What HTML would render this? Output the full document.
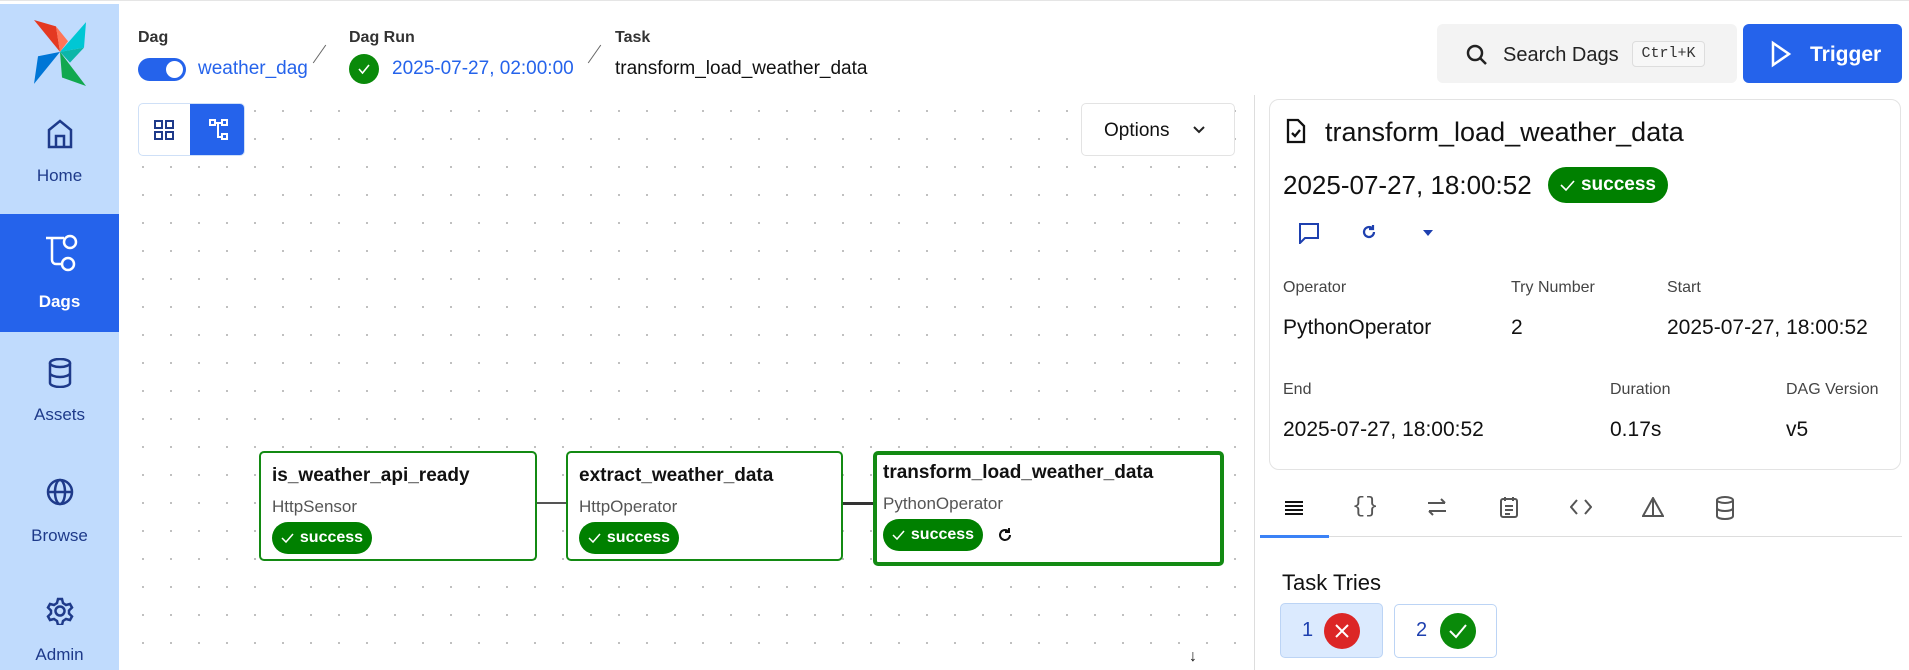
<!DOCTYPE html>
<html><head><meta charset="utf-8"><style>
*{box-sizing:border-box;margin:0;padding:0}
body{width:1909px;height:670px;overflow:hidden;background:#fff;font-family:"Liberation Sans",sans-serif;position:relative;color:#111}
.a{position:absolute}
.topline{left:0;top:0;width:1909px;height:4px;border-top:1px solid #e5e5e5;background:#fff}
.side{left:0;top:4px;width:119px;height:666px;background:#c0dbfd}
.nav{left:0;width:119px;text-align:center;color:#1e3a8a;font-size:17px}
.lbl{font-size:16px;font-weight:bold;color:#333}
.grid{left:119px;top:95px;width:1135px;height:575px;background-image:radial-gradient(circle,#bbb 1px,transparent 1.2px);background-size:28px 28px;background-position:10px 2px}
.node{border:2px solid #138a13;border-radius:5px;background:#fff}
.badge{background:#008000;color:#fff;border-radius:17px;font-weight:bold;font-size:16px;display:flex;align-items:center;justify-content:center;gap:6px}
.k{font-size:16px;color:#444}
.v{font-size:21px;color:#111}
</style></head><body>
<div class="a topline"></div>
<div class="a side"></div>
<!-- logo -->
<svg class="a" style="left:34px;top:20px" width="52" height="66" viewBox="0 0 52 62" preserveAspectRatio="none">
<path d="M0 0 L26 30 L22 6 Z" fill="#e43921"/><path d="M52 2 L26 30 L50 26 Z" fill="#00c7d4"/>
<path d="M52 62 L26 30 L28 54 Z" fill="#11a84f"/><path d="M0 60 L26 30 L4 34 Z" fill="#0076d6"/>
<path d="M26 30 L22 6 L34 20Z" fill="#ff7557"/><path d="M26 30 L50 26 L36 40Z" fill="#0cb6a8"/>
</svg>
<svg class="a" style="left:47px;top:119px" width="26" height="30" viewBox="0 0 26 30" fill="none" stroke="#1e3a8a" stroke-width="2.5"><path d="M2 28V11L13 2l11 9v17z"/><path d="M9 28V17h8v11"/></svg>
<div class="a nav" style="top:166px">Home</div>
<div class="a" style="left:0;top:214px;width:119px;height:118px;background:#2563eb"></div>
<svg class="a" style="left:44px;top:234px" width="34" height="38" viewBox="0 0 34 38" fill="none" stroke="#fff" stroke-width="2.5"><path d="M2 4h18M8 4v22a4 4 0 0 0 4 4h6"/><circle cx="26" cy="8" r="6"/><circle cx="24" cy="30" r="6"/></svg>
<div class="a nav" style="top:292px;color:#fff;font-weight:bold">Dags</div>
<svg class="a" style="left:47px;top:358px" width="26" height="30" viewBox="0 0 26 30" fill="none" stroke="#1e3a8a" stroke-width="2.5"><ellipse cx="13" cy="5" rx="10" ry="4"/><path d="M3 5v20c0 2 4.5 4 10 4s10-2 10-4V5M3 15c0 2 4.5 4 10 4s10-2 10-4"/></svg>
<div class="a nav" style="top:405px">Assets</div>
<svg class="a" style="left:46px;top:478px" width="28" height="28" viewBox="0 0 28 28" fill="none" stroke="#1e3a8a" stroke-width="2.5"><circle cx="14" cy="14" r="12"/><ellipse cx="14" cy="14" rx="5" ry="12"/><path d="M2 14h24"/></svg>
<div class="a nav" style="top:526px">Browse</div>
<svg class="a" style="left:46px;top:597px" width="28" height="28" viewBox="0 0 28 28" fill="none" stroke="#1e3a8a" stroke-width="2.5"><circle cx="14" cy="14" r="4.5"/><path d="M12 2h4l1 4 3 2 4-1 2 3.5-3 3v3l3 3-2 3.5-4-1-3 2-1 4h-4l-1-4-3-2-4 1-2-3.5 3-3v-3l-3-3 2-3.5 4 1 3-2z"/></svg>
<div class="a nav" style="top:645px">Admin</div>

<!-- breadcrumb -->
<div class="a lbl" style="left:138px;top:29px">Dag</div>
<div class="a" style="left:138px;top:58px;width:48px;height:23px;border-radius:12px;background:#2563eb"><div style="position:absolute;right:3px;top:3px;width:17px;height:17px;border-radius:50%;background:#fff"></div></div>
<div class="a" style="left:198px;top:58px;font-size:19px;color:#2563eb">weather_dag</div>
<div class="a" style="left:319px;top:43px;width:1px;height:22px;background:#666;transform:rotate(35deg)"></div>
<div class="a lbl" style="left:349px;top:29px">Dag Run</div>
<div class="a" style="left:349px;top:54px;width:30px;height:30px;border-radius:50%;background:#0a8a0a"></div>
<svg class="a" style="left:357px;top:62px" width="14" height="14" viewBox="0 0 14 14" fill="none" stroke="#fff" stroke-width="1.6"><path d="M2 7l3.5 4L12 3"/></svg>
<div class="a" style="left:392px;top:58px;font-size:19px;color:#2563eb">2025-07-27, 02:00:00</div>
<div class="a" style="left:594px;top:43px;width:1px;height:22px;background:#666;transform:rotate(35deg)"></div>
<div class="a lbl" style="left:615px;top:29px">Task</div>
<div class="a" style="left:615px;top:58px;font-size:19px;color:#111">transform_load_weather_data</div>

<!-- search/trigger -->
<div class="a" style="left:1437px;top:24px;width:300px;height:59px;background:#f3f3f3;border-radius:6px"></div>
<svg class="a" style="left:1465px;top:43px" width="24" height="24" viewBox="0 0 24 24" fill="none" stroke="#222" stroke-width="2.5"><circle cx="10" cy="10" r="7"/><path d="M15 15l6 6"/></svg>
<div class="a" style="left:1503px;top:44px;font-size:20px;color:#222">Search Dags</div>
<div class="a" style="left:1632px;top:41px;width:73px;height:26px;border:1px solid #ddd;border-radius:4px;background:#f7f7f7;font-family:'Liberation Mono',monospace;font-size:15px;text-align:center;line-height:24px;color:#333">Ctrl+K</div>
<div class="a" style="left:1743px;top:24px;width:159px;height:59px;background:#2563eb;border-radius:6px"></div>
<svg class="a" style="left:1770px;top:40px" width="22" height="28" viewBox="0 0 22 28" fill="none" stroke="#fff" stroke-width="2.5"><path d="M3 3v22l16-11z"/></svg>
<div class="a" style="left:1810px;top:43px;font-size:21px;color:#fff;font-weight:bold">Trigger</div>

<!-- graph -->
<div class="a grid"></div>
<div class="a" style="left:1254px;top:95px;width:1px;height:575px;background:#ddd"></div>
<div class="a" style="left:138px;top:103px;width:107px;height:53px;border:1px solid #cfe0f7;border-radius:5px;background:#fff;overflow:hidden"><div style="position:absolute;right:0;top:0;width:54px;height:53px;background:#2563eb"></div></div>
<svg class="a" style="left:154px;top:120px" width="20" height="20" viewBox="0 0 20 20" fill="none" stroke="#1e3a8a" stroke-width="2"><rect x="1" y="1" width="7" height="7"/><rect x="12" y="1" width="7" height="7"/><rect x="1" y="12" width="7" height="7"/><rect x="12" y="12" width="7" height="7"/></svg>
<svg class="a" style="left:209px;top:119px" width="20" height="22" viewBox="0 0 20 22" fill="none" stroke="#fff" stroke-width="2"><rect x="1" y="1" width="5" height="5"/><rect x="13" y="1" width="5" height="5"/><rect x="13" y="15" width="5" height="5"/><path d="M6 4h7M9 4v14h4"/></svg>
<div class="a" style="left:1081px;top:103px;width:154px;height:53px;border:1px solid #e3e3e3;border-radius:5px;background:#fff;font-size:19px;padding:16px 0 0 22px">Options</div>
<svg class="a" style="left:1192px;top:125px" width="14" height="9" viewBox="0 0 14 9" fill="none" stroke="#222" stroke-width="2"><path d="M2 2l5 5 5-5"/></svg>

<div class="a" style="left:536px;top:502px;width:30px;height:2px;background:#555"></div>
<div class="a" style="left:843px;top:502px;width:30px;height:3px;background:#333"></div>
<div class="a node" style="left:259px;top:451px;width:278px;height:110px"></div>
<div class="a" style="left:272px;top:465px;font-size:19px;font-weight:bold">is_weather_api_ready</div>
<div class="a" style="left:272px;top:497px;font-size:17px;color:#555">HttpSensor</div>
<div class="a badge" style="left:272px;top:522px;width:100px;height:32px"><svg width="13" height="12" viewBox="0 0 13 12" fill="none" stroke="#fff" stroke-width="1.5"><path d="M1 6l4 4 7-8"/></svg>success</div>
<div class="a node" style="left:566px;top:451px;width:277px;height:110px"></div>
<div class="a" style="left:579px;top:465px;font-size:19px;font-weight:bold">extract_weather_data</div>
<div class="a" style="left:579px;top:497px;font-size:17px;color:#555">HttpOperator</div>
<div class="a badge" style="left:579px;top:522px;width:100px;height:32px"><svg width="13" height="12" viewBox="0 0 13 12" fill="none" stroke="#fff" stroke-width="1.5"><path d="M1 6l4 4 7-8"/></svg>success</div>
<div class="a node" style="left:873px;top:451px;width:351px;height:115px;border-width:4px"></div>
<div class="a" style="left:883px;top:462px;font-size:19px;font-weight:bold">transform_load_weather_data</div>
<div class="a" style="left:883px;top:494px;font-size:17px;color:#555">PythonOperator</div>
<div class="a badge" style="left:883px;top:519px;width:100px;height:32px"><svg width="13" height="12" viewBox="0 0 13 12" fill="none" stroke="#fff" stroke-width="1.5"><path d="M1 6l4 4 7-8"/></svg>success</div>
<svg class="a" style="left:997px;top:527px" width="16" height="16" viewBox="0 0 16 16" fill="none" stroke="#111" stroke-width="2"><path d="M13 8a5 5 0 1 1-2-4"/><path d="M12 1v4H8" /></svg>
<div class="a" style="left:1189px;top:648px;font-size:16px">↓</div>

<!-- right card -->
<div class="a" style="left:1269px;top:99px;width:632px;height:371px;border:1px solid #e3e3e3;border-radius:10px"></div>
<svg class="a" style="left:1286px;top:118px" width="20" height="26" viewBox="0 0 20 26" fill="none" stroke="#111" stroke-width="2.3"><path d="M2 2h10l6 6v16H2z"/><path d="M6 15l3 3 5-6"/></svg>
<div class="a" style="left:1325px;top:117px;font-size:27px">transform_load_weather_data</div>
<div class="a" style="left:1283px;top:170px;font-size:26px;font-weight:500">2025-07-27, 18:00:52</div>
<div class="a badge" style="left:1548px;top:167px;width:120px;height:36px;border-radius:18px;font-size:19px"><svg width="15" height="13" viewBox="0 0 15 13" fill="none" stroke="#fff" stroke-width="1.6"><path d="M1 6l5 5 8-9"/></svg>success</div>
<svg class="a" style="left:1298px;top:222px" width="22" height="22" viewBox="0 0 22 22" fill="none" stroke="#1e40af" stroke-width="2"><path d="M2 2h18v14H7l-5 5z"/></svg>
<svg class="a" style="left:1361px;top:224px" width="16" height="16" viewBox="0 0 16 16" fill="none" stroke="#1e40af" stroke-width="2.2"><path d="M13 8a5 5 0 1 1-2-4"/><path d="M12 1v4H8"/></svg>
<div class="a" style="left:1423px;top:230px;width:0;height:0;border-left:5px solid transparent;border-right:5px solid transparent;border-top:6px solid #1e40af"></div>
<div class="a k" style="left:1283px;top:279px">Operator</div>
<div class="a k" style="left:1511px;top:279px">Try Number</div>
<div class="a k" style="left:1667px;top:279px">Start</div>
<div class="a v" style="left:1283px;top:316px">PythonOperator</div>
<div class="a v" style="left:1511px;top:316px">2</div>
<div class="a v" style="left:1667px;top:316px">2025-07-27, 18:00:52</div>
<div class="a k" style="left:1283px;top:381px">End</div>
<div class="a k" style="left:1610px;top:381px">Duration</div>
<div class="a k" style="left:1786px;top:381px">DAG Version</div>
<div class="a v" style="left:1283px;top:418px">2025-07-27, 18:00:52</div>
<div class="a v" style="left:1610px;top:418px">0.17s</div>
<div class="a v" style="left:1786px;top:418px">v5</div>

<!-- tabs -->
<svg class="a" style="left:1285px;top:500px" width="18" height="16" viewBox="0 0 18 16" stroke="#111" stroke-width="2"><path d="M0 2h18M0 6h18M0 10h18M0 14h18"/></svg>
<div class="a" style="left:1352px;top:494px;font-size:22px;color:#555;font-family:'Liberation Mono',monospace">{}</div>
<svg class="a" style="left:1427px;top:498px" width="20" height="18" viewBox="0 0 20 18" fill="none" stroke="#555" stroke-width="2"><path d="M1 5h17M14 1l4 4M19 13H2M6 17l-4-4"/></svg>
<svg class="a" style="left:1500px;top:496px" width="18" height="22" viewBox="0 0 18 22" fill="none" stroke="#555" stroke-width="2"><rect x="1" y="3" width="16" height="18" rx="2"/><path d="M5 1v4M13 1v4M5 10h8M5 14h8M5 18h5"/></svg>
<svg class="a" style="left:1570px;top:498px" width="22" height="18" viewBox="0 0 22 18" fill="none" stroke="#555" stroke-width="2"><path d="M7 2L1 9l6 7M15 2l6 7-6 7"/></svg>
<svg class="a" style="left:1642px;top:497px" width="22" height="20" viewBox="0 0 22 20" fill="none" stroke="#555" stroke-width="2"><path d="M11 1L1 19h20zM11 1v18"/></svg>
<svg class="a" style="left:1715px;top:496px" width="20" height="24" viewBox="0 0 20 24" fill="none" stroke="#555" stroke-width="2"><ellipse cx="10" cy="4" rx="8" ry="3"/><path d="M2 4v16c0 2 4 3 8 3s8-1 8-3V4M2 12c0 2 4 3 8 3s8-1 8-3"/></svg>
<div class="a" style="left:1260px;top:536px;width:642px;height:1px;background:#ddd"></div>
<div class="a" style="left:1260px;top:535px;width:69px;height:3px;background:#3b82f6"></div>

<div class="a" style="left:1282px;top:570px;font-size:22px;font-weight:500">Task Tries</div>
<div class="a" style="left:1280px;top:603px;width:103px;height:55px;background:#dbeafe;border:1px solid #bcd4f5;border-radius:5px"></div>
<div class="a" style="left:1302px;top:619px;font-size:20px;color:#1e40af">1</div>
<div class="a" style="left:1324px;top:613px;width:36px;height:36px;border-radius:50%;background:#dc2626"></div>
<svg class="a" style="left:1334px;top:623px" width="16" height="16" viewBox="0 0 16 16" stroke="#fff" stroke-width="2"><path d="M2 2l12 12M14 2L2 14"/></svg>
<div class="a" style="left:1394px;top:604px;width:103px;height:54px;background:#fff;border:1px solid #bcd4f5;border-radius:5px"></div>
<div class="a" style="left:1416px;top:619px;font-size:20px;color:#1e40af">2</div>
<div class="a" style="left:1440px;top:613px;width:36px;height:36px;border-radius:50%;background:#0a8a0a"></div>
<svg class="a" style="left:1448px;top:622px" width="20" height="18" viewBox="0 0 20 18" fill="none" stroke="#fff" stroke-width="2"><path d="M2 9l6 6L18 3"/></svg>
</body></html>
